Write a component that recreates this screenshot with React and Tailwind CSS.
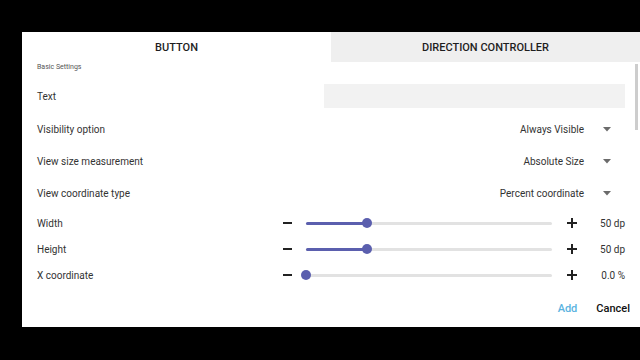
import React from 'react';

const font = { fontFamily: 'Roboto, "Noto Sans", sans-serif' };

function Dropdown({ value }) {
  return (
    <div className="flex items-center">
      <span className="text-[10px] text-[#333]">{value}</span>
      <svg className="ml-[19px] mr-[14px]" width="8" height="5" viewBox="0 0 8 5">
        <path d="M0 0 H8 L4 4.5 Z" fill="#6b6b6b" />
      </svg>
    </div>
  );
}

function SliderRow({ label, pct, value }) {
  return (
    <div className="flex h-[26px] items-center">
      <span className="flex-1 text-[10px] text-[#333]">{label}</span>
      <div className="flex w-[14px] justify-center">
        <div className="h-[1.5px] w-[9px] bg-[#222]" />
      </div>
      <div className="relative ml-[12px] h-[3px] w-[246px] rounded-full bg-[#e2e2e2]">
        <div className="absolute left-0 top-0 h-[3px] rounded-full bg-[#5b5fae]" style={{ width: `${pct}%` }} />
        <div
          className="absolute top-[-3.5px] h-[10px] w-[10px] -translate-x-1/2 rounded-full bg-[#5b5fae]"
          style={{ left: `${pct}%` }}
        />
      </div>
      <div className="ml-[13px] flex w-[14px] items-center justify-center">
        <div className="relative h-[10px] w-[10px]">
          <div className="absolute left-0 top-[4.25px] h-[1.5px] w-[10px] bg-[#222]" />
          <div className="absolute left-[4.25px] top-0 h-[10px] w-[1.5px] bg-[#222]" />
        </div>
      </div>
      <span className="w-[46px] text-right text-[10px] text-[#333]">{value}</span>
    </div>
  );
}

export default function App() {
  return (
    <div className="h-[360px] w-[640px] overflow-hidden bg-black pt-[32px] pl-[22px]" style={font}>
      <div className="relative flex h-[295px] w-[618px] flex-col overflow-hidden bg-white">
        <div className="flex h-[30px] shrink-0">
          <div className="flex w-[309px] items-center justify-center pt-[3px] text-[11px] font-medium text-[#1e1e1e]">
            BUTTON
          </div>
          <div className="flex w-[309px] items-center justify-center bg-[#efefef] pt-[3px] text-[11px] font-medium text-[#1e1e1e]">
            DIRECTION CONTROLLER
          </div>
        </div>
        <div className="px-[15px]">
          <div className="h-[18px] text-[7px] leading-[10px] text-[#555]">Basic Settings</div>
          <div className="flex h-[32px] items-center">
            <span className="flex-1 text-[10px] text-[#333]">Text</span>
            <div className="h-[24px] w-[301px] bg-[#f2f2f2]" />
          </div>
          <div className="flex h-[32px] items-center justify-between pt-[2px]">
            <span className="text-[10px] text-[#333]">Visibility option</span>
            <Dropdown value="Always Visible" />
          </div>
          <div className="flex h-[32px] items-center justify-between pt-[2px]">
            <span className="text-[10px] text-[#333]">View size measurement</span>
            <Dropdown value="Absolute Size" />
          </div>
          <div className="flex h-[32px] items-center justify-between pt-[2px]">
            <span className="text-[10px] text-[#333]">View coordinate type</span>
            <Dropdown value="Percent coordinate" />
          </div>
          <div className="h-[2px]" />
          <SliderRow label="Width" pct={24.8} value="50 dp" />
          <SliderRow label="Height" pct={24.8} value="50 dp" />
          <SliderRow label="X coordinate" pct={0} value="0.0 %" />
          <div className="flex h-[38px] items-center justify-end gap-[19px] pt-[4px]">
            <span className="text-[11px] font-medium text-[#5ab3e0]">Add</span>
            <span className="mr-[-5px] text-[11px] font-medium text-[#111]">Cancel</span>
          </div>
        </div>
        <div className="absolute right-[2px] top-[32px] h-[66px] w-[3px] bg-[#cdcdcd]" />
      </div>
    </div>
  );
}
